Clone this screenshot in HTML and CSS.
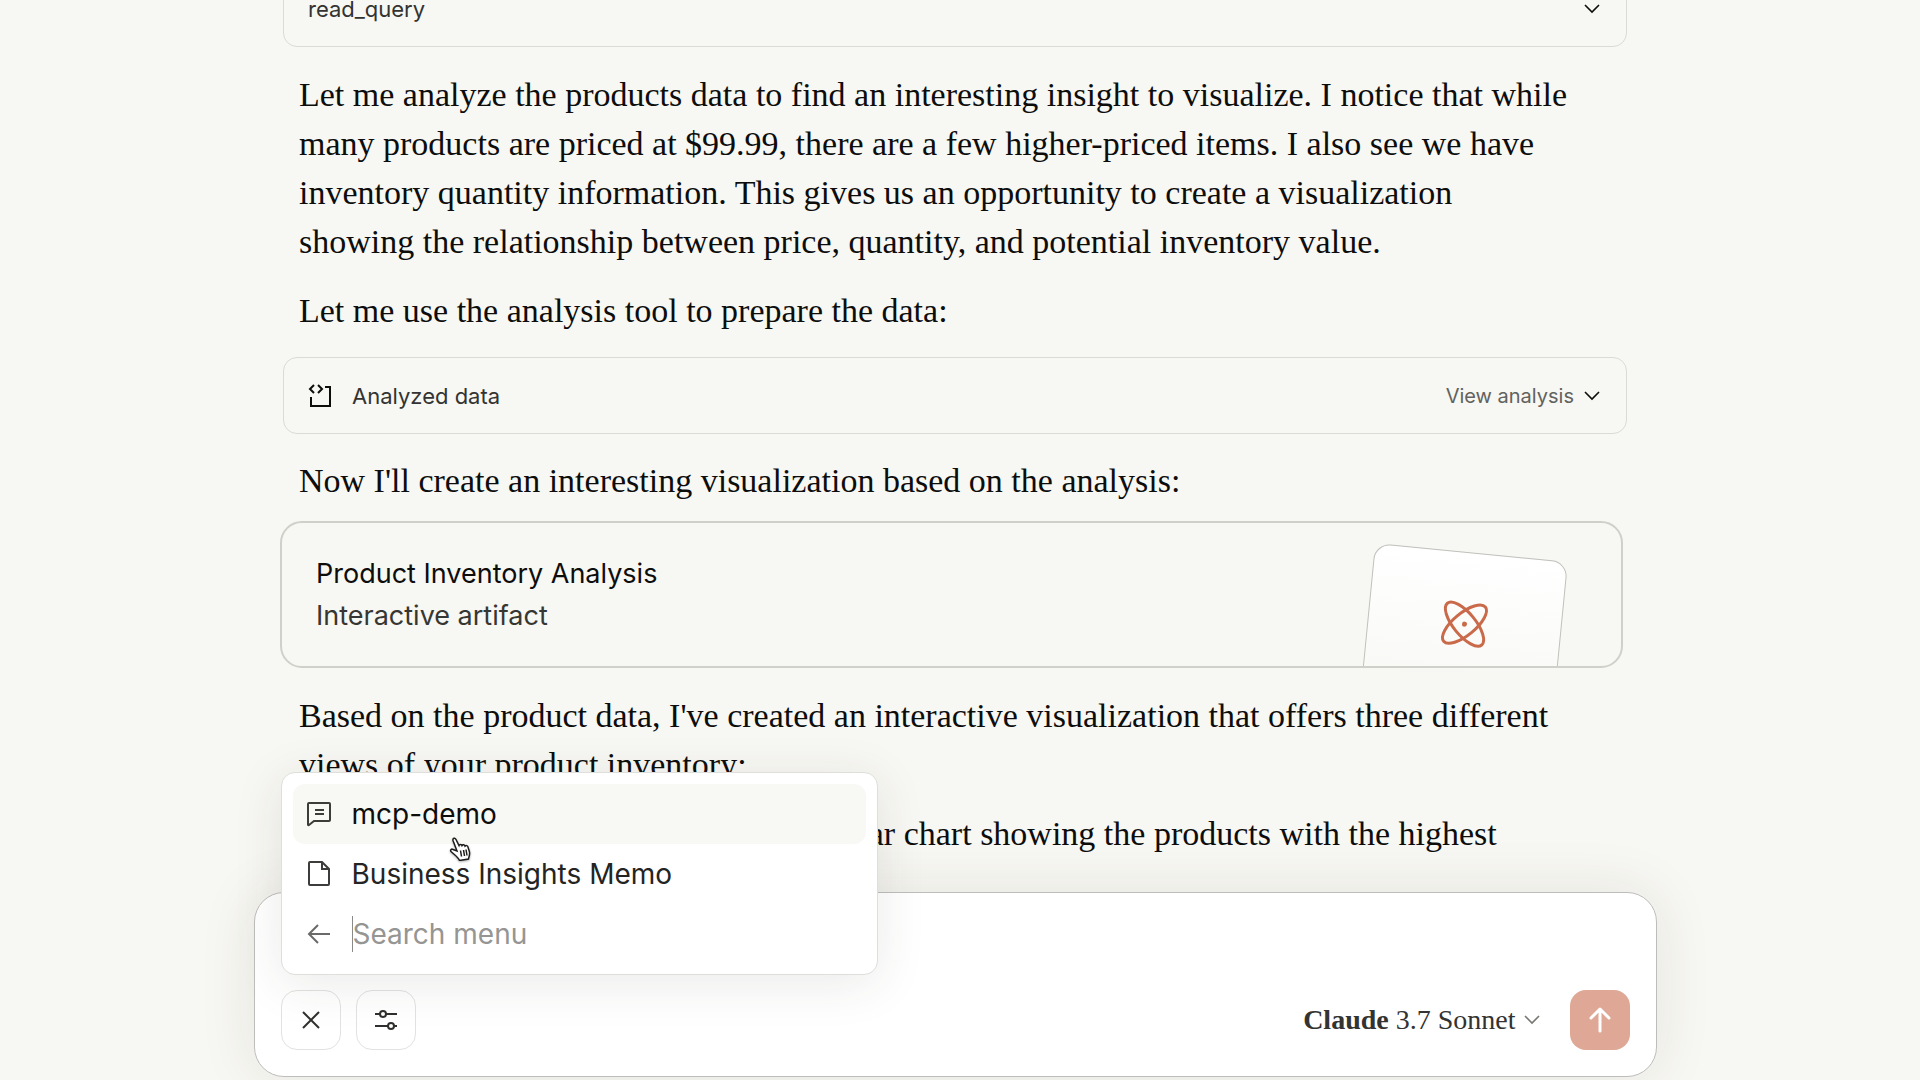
FILE: index.html
```html
<!DOCTYPE html>
<html lang="en">
<head>
<meta charset="utf-8">
<meta name="viewport" content="width=device-width, initial-scale=1">
<title>Claude</title>
<link rel="stylesheet" href="styles.css">
</head>
<body>
<div class="app">
  <main class="thread">
    <button class="tool" type="button">
      <span class="tool-name">read_query</span>
      <svg class="chevron" viewBox="0 0 16 10"><path d="M1 1l7 7 7-7"/></svg>
    </button>
    <p>Let me analyze the products data to find an interesting insight to visualize. I notice that while<br>
      many products are priced at $99.99, there are a few higher-priced items. I also see we have<br>
      inventory quantity information. This gives us an opportunity to create a visualization<br>
      showing the relationship between price, quantity, and potential inventory value.</p>
    <p>Let me use the analysis tool to prepare the data:</p>
    <button class="tool" type="button">
      <svg class="tool-icon" viewBox="0 0 24 24"><path d="M6 1L2 5l4 4M10 1l4 4-4 4M17 3h5v19H3v-9"/></svg>
      <span class="tool-name">Analyzed data</span>
      <span class="tool-action">View analysis</span>
      <svg class="chevron" viewBox="0 0 16 10"><path d="M1 1l7 7 7-7"/></svg>
    </button>
    <p>Now I'll create an interesting visualization based on the analysis:</p>
    <button class="artifact" type="button">
      <span class="artifact-text">
        <span class="artifact-title">Product Inventory Analysis</span>
        <span class="artifact-kind">Interactive artifact</span>
      </span>
      <span class="artifact-preview">
        <svg class="atom" viewBox="-25 -25 50 50">
          <ellipse rx="27" ry="11" transform="rotate(45)"/>
          <ellipse rx="27" ry="11" transform="rotate(-45)"/>
          <circle r="2.5"/>
        </svg>
      </span>
    </button>
    <p>Based on the product data, I've created an interactive visualization that offers three different<br>
      views of your product inventory:</p>
    <ol class="views">
      <li>Top 10 Products by Highest Price: A bar chart showing the products with the highest</li>
    </ol>
  </main>

  <form class="composer">
    <textarea class="prompt" rows="1" aria-label="Message"></textarea>
    <div class="toolbar">
      <button class="square" type="button" aria-label="Close menu">
        <svg class="icon-close" viewBox="0 0 18 18"><path d="M1 1l16 16M17 1L1 17"/></svg>
      </button>
      <button class="square" type="button" aria-label="Tools">
        <svg class="icon-sliders" viewBox="0 0 24 20"><path d="M1 4h5M12 4h11M1 16h13M20 16h3"/><circle cx="9" cy="4" r="3"/><circle cx="17" cy="16" r="3"/></svg>
      </button>
      <button class="model" type="button" aria-haspopup="listbox">
        <span><span class="brand">Claude</span> 3.7 Sonnet</span>
        <svg class="chevron" viewBox="0 0 16 10"><path d="M1 1l7 7 7-7"/></svg>
      </button>
      <button class="send" type="submit" aria-label="Send">
        <svg class="icon-send" viewBox="0 0 24 26"><path d="M12 24V3M3 11l9-9 9 9"/></svg>
      </button>
    </div>

    <div class="menu">
      <button class="menu-row active" type="button">
        <svg class="menu-icon" viewBox="0 0 26 26"><path d="M3 2h20a1 1 0 0 1 1 1v16a1 1 0 0 1-1 1H8l-5 4a.6.6 0 0 1-1-.5V3a1 1 0 0 1 1-1zM9 9h9M9 13h9"/></svg>
        mcp-demo
      </button>
      <button class="menu-row" type="button">
        <svg class="menu-icon" viewBox="0 0 26 26"><path d="M4 1h12l7 7v15a1 1 0 0 1-1 1H4a1 1 0 0 1-1-1V2a1 1 0 0 1 1-1zM16 1v7h7"/></svg>
        Business Insights Memo
      </button>
      <label class="menu-row">
        <svg class="menu-icon back" viewBox="0 0 26 26"><path d="M24 13H3M12 4l-9 9 9 9"/></svg>
        <input class="menu-search" type="text" placeholder="Search menu" aria-label="Search menu">
      </label>
      <svg class="pointer" viewBox="0 0 22 24"><path d="M8 14L4 3.500C3.500 1 6 .5 7 2.500l3 6c.5-1.500 2.500-1.500 3 0 .8-1.300 2.600-1 3 .6 1-1 2.700-.6 3 1L20.500 15c.5 3-.5 4-1 7l-9 1.500C9.500 20.500 7 19 2 14.500c-1-1.500.5-3 2-2z"/><path d="M11.500 13.500l1 6M14.500 13l1 6M17 12.500l1 6"/></svg>
    </div>
  </form>
</div>
</body>
</html>
```
FILE: styles.css
```css
* { box-sizing: border-box; }

body {
  margin: 0;
  background: #f7f7f3;
  color: #0d0d0c;
  font-family: Inter, "Liberation Sans", sans-serif;
}

button, input, textarea {
  font: inherit;
  color: inherit;
}

button {
  border: 0;
  padding: 0;
  background: none;
  text-align: left;
  cursor: pointer;
}

svg {
  flex: none;
  fill: none;
  stroke: currentColor;
  stroke-width: 2;
}

.app {
  position: relative;
  height: 100vh;
  padding-right: 10px;
  overflow: hidden;
}

/* The thread is scrolled so its first card is partly out of view */
.thread {
  display: flex;
  flex-direction: column;
  max-width: 1344px;
  margin: -30px auto 0;
}

.thread p, .views {
  margin: 0;
  padding: 0 16px;
  font: 34px/49px "Liberation Serif", serif;
  white-space: nowrap;
}

.thread p + p { margin-top: 20px; }

.tool {
  display: flex;
  align-items: center;
  height: 77px;
  padding: 0 26px 0 24px;
  border: 1px solid #dbdbd6;
  border-radius: 14px;
  font-size: 22px;
}

.tool:first-child { margin-bottom: 23px; }
.tool:not(:first-child) { margin: 22px 0; }

.tool-icon { width: 24px; height: 24px; margin-right: 20px; }
.tool-name { flex: 1; color: #333331; }
.tool-action { margin-right: 10px; color: #62625e; font-size: 20px; }
.chevron { width: 16px; height: 10px; stroke-width: 1.6; }

.artifact {
  display: flex;
  height: 147px;
  margin: 16px 4px 23px -3px;
  border: 2px solid #d0d0cb;
  border-radius: 22px;
  overflow: hidden;
}

.artifact-text {
  flex: 1;
  display: flex;
  flex-direction: column;
  justify-content: center;
  padding-left: 34px;
  font-size: 27px;
  line-height: 42px;
}

.artifact-kind { color: #363633; }

.artifact-preview {
  display: flex;
  align-items: center;
  justify-content: center;
  width: 194px;
  height: 144px;
  margin: 20px 52px 0 0;
  border: 1px solid #c0c0bc;
  border-radius: 16px;
  background: linear-gradient(#fff, #f8f8f5);
  transform: rotate(5.6deg);
  transform-origin: 0 0;
}

.atom {
  width: 50px;
  height: 50px;
  color: #c96a4b;
  stroke-width: 3;
}

.atom circle { fill: currentColor; stroke: none; }

.thread .views { margin-top: 20px; padding-left: 64px; }

.composer {
  position: absolute;
  right: 10px;
  bottom: 3px;
  left: 0;
  max-width: 1403px;
  margin: 0 auto;
  padding: 24px 26px 26px;
  border: 1px solid #bdbdbb;
  border-radius: 30px;
  background: #fff;
  box-shadow: 0 0 60px rgba(70, 50, 30, 0.09);
}

.prompt {
  display: block;
  width: 100%;
  height: 48px;
  margin-bottom: 25px;
  padding: 0;
  border: 0;
  outline: 0;
  background: none;
  resize: none;
}

.toolbar { display: flex; align-items: center; gap: 15px; }

.square, .send {
  display: flex;
  align-items: center;
  justify-content: center;
  width: 60px;
  height: 60px;
  border: 1px solid #e2e2e0;
  border-radius: 16px;
  color: #30302e;
}

.send { border: 0; background: #dfa795; color: #fff; }

.icon-close { width: 18px; height: 18px; }
.icon-sliders { width: 24px; height: 20px; }
.icon-send { width: 24px; height: 26px; stroke-width: 3; stroke-linecap: round; stroke-linejoin: round; }

.model {
  display: flex;
  align-items: center;
  gap: 8px;
  margin: 0 15px 0 auto;
  color: #333331;
  font: 28px/36px "Liberation Serif", serif;
}

.brand { font-weight: bold; }
.model .chevron { color: #777773; }

.menu {
  position: absolute;
  bottom: 101px;
  left: 26px;
  width: 597px;
  padding: 11px 11px 10px;
  border: 1px solid #dededb;
  border-radius: 14px;
  background: #fff;
  box-shadow: 0 8px 50px rgba(60, 50, 40, 0.1);
}

.menu-row {
  display: flex;
  align-items: center;
  gap: 20px;
  width: 100%;
  height: 60px;
  padding-left: 13px;
  border-radius: 12px;
  color: #242423;
  font-size: 28px;
}

.active { background: #f8f8f5; color: #0d0d0c; }

.menu-icon { width: 26px; height: 26px; color: #3c3c3a; }
.back { color: #6a6a68; }

.menu-search {
  flex: 1;
  min-width: 0;
  height: 36px;
  padding: 0;
  border: 0;
  border-left: 1px solid #8a8a88;
  outline: 0;
  background: none;
}

.menu-search::placeholder { color: #959593; opacity: 1; }

.pointer {
  position: absolute;
  top: 64px;
  left: 167px;
  width: 22px;
  height: 24px;
  fill: #fff;
  stroke: #1c1c1b;
  stroke-width: 1.5;
  filter: drop-shadow(0 1px 1px rgba(0, 0, 0, 0.3));
}
```
